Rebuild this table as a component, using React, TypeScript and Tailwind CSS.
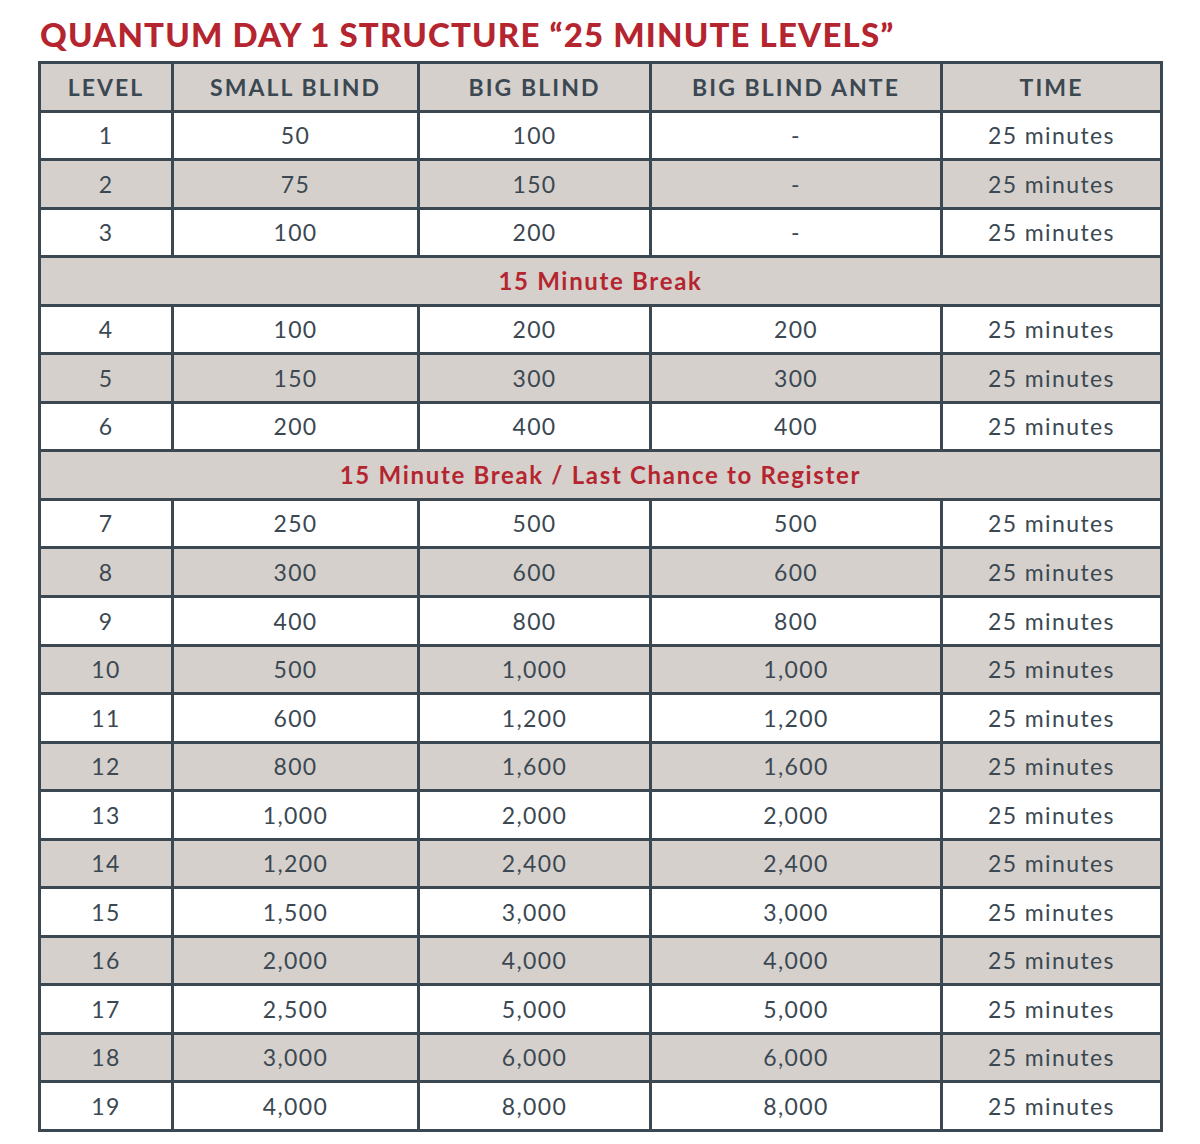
type Row =
  | { kind: "level"; level: number; small: string; big: string; ante: string }
  | { kind: "break"; label: string }

const rows: Row[] = [
  { kind: "level", level: 1, small: "50", big: "100", ante: "-" },
  { kind: "level", level: 2, small: "75", big: "150", ante: "-" },
  { kind: "level", level: 3, small: "100", big: "200", ante: "-" },
  { kind: "break", label: "15 Minute Break" },
  { kind: "level", level: 4, small: "100", big: "200", ante: "200" },
  { kind: "level", level: 5, small: "150", big: "300", ante: "300" },
  { kind: "level", level: 6, small: "200", big: "400", ante: "400" },
  { kind: "break", label: "15 Minute Break / Last Chance to Register" },
  { kind: "level", level: 7, small: "250", big: "500", ante: "500" },
  { kind: "level", level: 8, small: "300", big: "600", ante: "600" },
  { kind: "level", level: 9, small: "400", big: "800", ante: "800" },
  { kind: "level", level: 10, small: "500", big: "1,000", ante: "1,000" },
  { kind: "level", level: 11, small: "600", big: "1,200", ante: "1,200" },
  { kind: "level", level: 12, small: "800", big: "1,600", ante: "1,600" },
  { kind: "level", level: 13, small: "1,000", big: "2,000", ante: "2,000" },
  { kind: "level", level: 14, small: "1,200", big: "2,400", ante: "2,400" },
  { kind: "level", level: 15, small: "1,500", big: "3,000", ante: "3,000" },
  { kind: "level", level: 16, small: "2,000", big: "4,000", ante: "4,000" },
  { kind: "level", level: 17, small: "2,500", big: "5,000", ante: "5,000" },
  { kind: "level", level: 18, small: "3,000", big: "6,000", ante: "6,000" },
  { kind: "level", level: 19, small: "4,000", big: "8,000", ante: "8,000" },
]

const cell = "h-[48.55px] border-[3px] border-[#3b4852] p-0 text-center align-middle"

export default function App() {
  // stripes restart after every break row
  let stripe = 0

  return (
    <div className="min-h-[1144px] w-[1200px] bg-white font-['Lato','Liberation_Sans',sans-serif] text-[#3b4852]">
      <div className="pl-[38px] pt-[11px]">
        <h1 className="mb-[3px] ml-[2px] h-[47px] text-[33px] leading-[47px] font-black tracking-[0.035em] text-[#b5252f]">
          QUANTUM DAY 1 STRUCTURE “25 MINUTE LEVELS”
        </h1>
        <table className="w-[1122px] table-fixed border-collapse">
          <colgroup>
            <col className="w-[133px]" />
            <col className="w-[246px]" />
            <col className="w-[232px]" />
            <col className="w-[291px]" />
            <col className="w-[220px]" />
          </colgroup>
          <thead>
            <tr className="bg-[#d5d0cc] text-[23px] font-bold tracking-[0.09em]">
              <th className={cell}>LEVEL</th>
              <th className={cell}>SMALL BLIND</th>
              <th className={cell}>BIG BLIND</th>
              <th className={cell}>BIG BLIND ANTE</th>
              <th className={cell}>TIME</th>
            </tr>
          </thead>
          <tbody className="text-[23px] tracking-[0.06em]">
            {rows.map((row, i) => {
              if (row.kind === "break") {
                stripe = 0
                return (
                  <tr key={i} className="bg-[#d5d0cc]">
                    <td colSpan={5} className={`${cell} text-[24px] font-bold tracking-[0.07em] text-[#b5252f]`}>
                      {row.label}
                    </td>
                  </tr>
                )
              }
              const gray = stripe % 2 === 1
              stripe++
              return (
                <tr key={i} className={gray ? "bg-[#d5d0cc]" : "bg-white"}>
                  <td className={cell}>{row.level}</td>
                  <td className={cell}>{row.small}</td>
                  <td className={cell}>{row.big}</td>
                  <td className={cell}>{row.ante}</td>
                  <td className={cell}>25 minutes</td>
                </tr>
              )
            })}
          </tbody>
        </table>
      </div>
    </div>
  )
}
